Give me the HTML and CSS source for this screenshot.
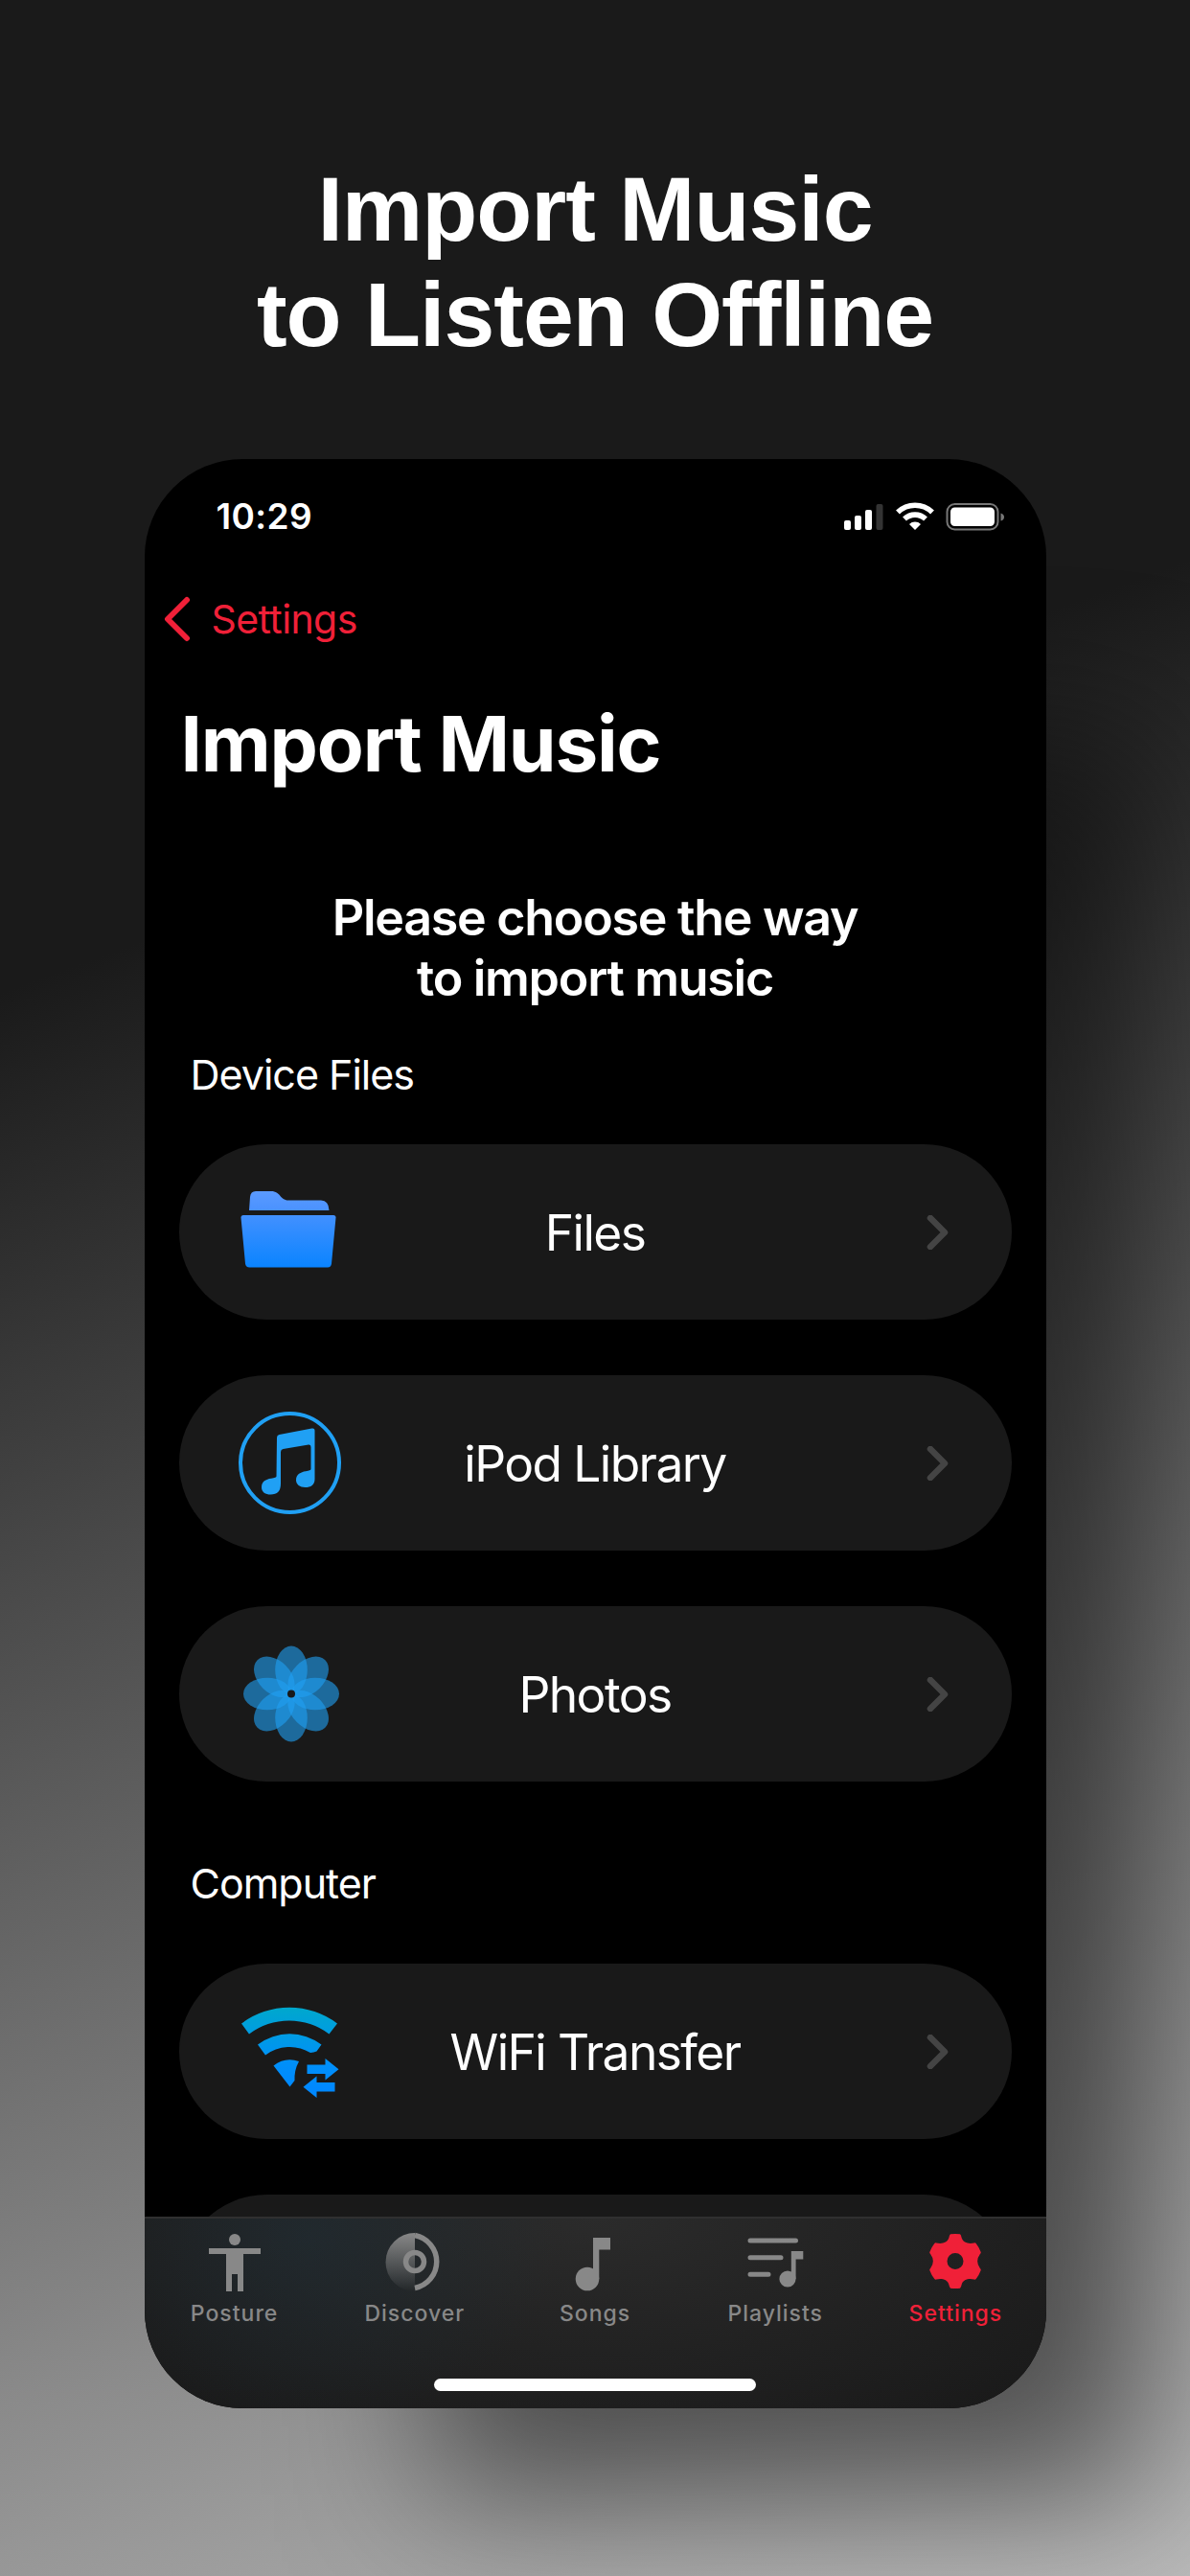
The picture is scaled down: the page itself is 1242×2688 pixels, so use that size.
FILE: index.html
```html
<!DOCTYPE html>
<html lang="en">
<head>
    <meta charset="UTF-8">
    <meta name="viewport" content="width=device-width, initial-scale=1.0">
    <title>Import Music</title>
    <link rel="stylesheet" href="styles.css">
</head>
<body>
    <h1 class="headline">Import Music<br>to Listen Offline</h1>

    <div class="phone">
        <div class="status-bar">
            <span class="time">10:29</span>
            <svg class="status-icons" width="170" height="32" viewBox="0 0 170 32">
                <!-- signal -->
                <rect x="1" y="20" width="7" height="10" rx="2" fill="#fff"/>
                <rect x="12" y="15" width="7" height="15" rx="2" fill="#fff"/>
                <rect x="23" y="9" width="7" height="21" rx="2" fill="#fff"/>
                <rect x="34.500" y="3" width="7" height="27" rx="2" fill="#333"/>
                <!-- wifi -->
                <g fill="none" stroke="#fff" stroke-width="5.600">
                    <path d="M57 11.500a26 26 0 0 1 36 0"/>
                    <path d="M64 18.500a16 16 0 0 1 22 0"/>
                </g>
                <path d="M75 30l-6-6a8.500 8.500 0 0 1 12 0z" fill="#fff"/>
                <!-- battery -->
                <rect x="108.500" y="3" width="53" height="26.500" rx="8" fill="none" stroke="#777" stroke-width="2"/>
                <rect x="112" y="6.500" width="46" height="19.500" rx="4.500" fill="#fff"/>
                <path d="M164.500 12.500q3.500 1 3.500 4t-3.500 4z" fill="#777"/>
            </svg>
        </div>

        <a class="back" href="#">
            <svg width="28" height="48" viewBox="0 0 28 48"><path d="M24 4L4 24l20 20" fill="none" stroke="#f02038" stroke-width="6" stroke-linecap="round" stroke-linejoin="round"/></svg>
            <span>Settings</span>
        </a>

        <h2 class="title">Import Music</h2>
        <p class="subtitle">Please choose the way<br>to import music</p>

        <div class="list">
            <h3 class="section">Device Files</h3>
            <a class="row" href="#">
                <svg class="row-icon" width="110" height="110" viewBox="0 0 110 110">
                    <defs>
                        <linearGradient id="folderBack" x1="0" y1="0" x2="0" y2="1">
                            <stop offset="0" stop-color="#5b9aff"/>
                            <stop offset="1" stop-color="#4a92ff"/>
                        </linearGradient>
                        <linearGradient id="folderFront" x1="0" y1="0" x2="0" y2="1">
                            <stop offset="0" stop-color="#4290ff"/>
                            <stop offset="1" stop-color="#0a84ff"/>
                        </linearGradient>
                    </defs>
                    <path d="M13 32l1-14q.500-6 6-6h16c10 0 9 9.500 18 9.500h34q8 0 8.500 10.500z" fill="url(#folderBack)"/>
                    <path d="M4.500 39.500q0-2.500 2.500-2.500h94q2.500 0 2.500 2.500l-4.500 48q-.500 4-4 4H13.500q-4 0-4.500-4z" fill="url(#folderFront)"/>
                </svg>
                <span class="row-label">Files</span>
                <svg class="chevron" width="24" height="36" viewBox="0 0 24 36"><path d="M4 3l15 15L4 33"/></svg>
            </a>
            <a class="row" href="#">
                <svg class="row-icon" width="110" height="110" viewBox="0 0 110 110">
                    <circle cx="55.500" cy="54.500" r="51.500" fill="none" stroke="#20a0f4" stroke-width="4"/>
                    <path d="M42 28q0-2.500 2.500-3l34-6.500q3-.500 3 2v51c0 6-4 8.500-10 8.500-5.500 0-9.500-3-9.500-7.500 0-6 5-8.500 10-9.200q5.500-.800 5.500-2.300V38q0-3-2.500-2.500L48.500 40q-2.500.500-2.500 3v33c0 8-3.500 11.500-10.500 11.500-5.500 0-9.500-2.500-9.500-7.500 0-6 4.500-8.500 10-9.200q5.500-.800 5.500-2.300z" fill="#20a0f4"/>
                </svg>
                <span class="row-label">iPod Library</span>
                <svg class="chevron" width="24" height="36" viewBox="0 0 24 36"><path d="M4 3l15 15L4 33"/></svg>
            </a>
            <a class="row" href="#">
                <svg class="row-icon" width="110" height="110" viewBox="0 0 110 110">
                    <g fill="#20a0f4" fill-opacity=".6">
                        <ellipse cx="57" cy="29.500" rx="16.800" ry="25"/>
                        <ellipse cx="57" cy="29.500" rx="16.800" ry="25" transform="rotate(45 57 54.500)"/>
                        <ellipse cx="57" cy="29.500" rx="16.800" ry="25" transform="rotate(90 57 54.500)"/>
                        <ellipse cx="57" cy="29.500" rx="16.800" ry="25" transform="rotate(135 57 54.500)"/>
                        <ellipse cx="57" cy="29.500" rx="16.800" ry="25" transform="rotate(180 57 54.500)"/>
                        <ellipse cx="57" cy="29.500" rx="16.800" ry="25" transform="rotate(225 57 54.500)"/>
                        <ellipse cx="57" cy="29.500" rx="16.800" ry="25" transform="rotate(270 57 54.500)"/>
                        <ellipse cx="57" cy="29.500" rx="16.800" ry="25" transform="rotate(315 57 54.500)"/>
                    </g>
                    <circle cx="57" cy="54.500" r="4" fill="#191919"/>
                </svg>
                <span class="row-label">Photos</span>
                <svg class="chevron" width="24" height="36" viewBox="0 0 24 36"><path d="M4 3l15 15L4 33"/></svg>
            </a>

            <h3 class="section section-computer">Computer</h3>
            <a class="row" href="#">
                <svg class="row-icon" width="110" height="110" viewBox="0 0 110 110">
                    <defs>
                        <linearGradient id="wifi" gradientUnits="userSpaceOnUse" x1="0" y1="8" x2="0" y2="95">
                            <stop offset="0" stop-color="#00a8cc"/>
                            <stop offset=".65" stop-color="#0090f8"/>
                            <stop offset="1" stop-color="#0088ff"/>
                        </linearGradient>
                    </defs>
                    <g fill="url(#wifi)">
                        <path d="M5 25.500a83 83 0 0 1 100 0l-8.500 11a69 69 0 0 0-83.500 0z"/>
                        <path d="M22 47.500a55 55 0 0 1 66.500 0l-5 7q-3 1-6.500 1.500a42 42 0 0 0-47 2.500z"/>
                        <path d="M38.500 69.500a28 28 0 0 1 26.500-4.500q-5 9-4.500 20l-5 6.500z"/>
                        <path d="M73.500 68.500h19V62l14 11.200-14 11.300v-6.500h-19z"/>
                        <path d="M102.500 87H83.500v-6.500l-14 11.200 14 11.300v-6.500h19z"/>
                    </g>
                </svg>
                <span class="row-label">WiFi Transfer</span>
                <svg class="chevron" width="24" height="36" viewBox="0 0 24 36"><path d="M4 3l15 15L4 33"/></svg>
            </a>
            <div class="row"></div>
        </div>

        <div class="tab-bar">
            <div class="tabs">
                <a class="tab" href="#">
                    <svg width="64" height="64" viewBox="0 0 64 64" fill="currentColor">
                        <circle cx="32" cy="8" r="6"/>
                        <path d="M5 17h54v6H41v39h-6V44h-6v18h-6V23H5z"/>
                    </svg>
                    Posture
                </a>
                <a class="tab" href="#">
                    <svg width="64" height="64" viewBox="0 0 64 64">
                        <defs>
                            <linearGradient id="disc" x1="0" y1="0" x2="0" y2="1">
                                <stop offset="0" stop-color="#888"/>
                                <stop offset="1" stop-color="#888" stop-opacity="0"/>
                            </linearGradient>
                        </defs>
                        <path d="M32 1a30.500 30.500 0 0 0 0 61z" fill="url(#disc)"/>
                        <path d="M32 3.500a28 28 0 0 1 0 55" fill="none" stroke="#888" stroke-width="5.500"/>
                        <circle cx="32" cy="31" r="9.500" fill="none" stroke="#888" stroke-width="5.500"/>
                    </svg>
                    Discover
                </a>
                <a class="tab" href="#">
                    <svg width="64" height="64" viewBox="0 0 64 64" fill="currentColor">
                        <circle cx="24" cy="49" r="12.300"/>
                        <path d="M30 6h18v12.500H36.300V49H30z"/>
                    </svg>
                    Songs
                </a>
                <a class="tab" href="#">
                    <svg width="64" height="64" viewBox="0 0 64 64" fill="currentColor">
                        <path d="M6 9h47.500M6 26.700h32M6 44.300h19" stroke="currentColor" stroke-width="5" stroke-linecap="round"/>
                        <circle cx="45" cy="49" r="8.600"/>
                        <path d="M48.800 20h12.500v8.500h-7.700V49h-4.800z"/>
                    </svg>
                    Playlists
                </a>
                <a class="tab active" href="#">
                    <svg width="64" height="64" viewBox="0 0 64 64" fill="currentColor">
                        <path fill-rule="evenodd" d="M27 2.300q5-.800 10 0q1 .700 1.700 4c1.500 5 7.500 6.500 13 5.100q1.300-.200 2 .6q3.300 4.200 5 9q.3 1-.8 2q-5.500 7.500 0 15q1.100 1 .8 2q-1.700 4.800-5 9q-.700.800-2 .6c-5.500-1.400-11.500.100-13 5.100q-.700 3.300-1.700 4q-5 .800-10 0q-1-.700-1.700-4c-1.500-5-7.500-6.500-13-5.100q-1.300.200-2-.6q-3.300-4.200-5-9q-.3-1 .8-2q5.500-7.500 0-15q-1.100-1-.8-2q1.700-4.800 5-9q.700-.800 2-.6c5.500 1.400 11.500-.100 13-5.100q.700-3.300 1.700-4zM32 22a8.500 8.500 0 1 0 0 17a8.500 8.500 0 1 0 0-17z"/>
                    </svg>
                    Settings
                </a>
            </div>
            <div class="home-indicator"></div>
        </div>
    </div>
</body>
</html>
```
FILE: styles.css
```css
* {
    box-sizing: border-box;
}

body {
    margin: 0;
    height: 2688px;
    padding-top: 163px;
    overflow: hidden;
    color: #fff;
    font-family: Inter, "Liberation Sans", sans-serif;
    background: linear-gradient(160deg, #1a1a1a 33%, #bababa 100%);
}

h1, h2, h3, p {
    margin: 0;
}

a {
    color: inherit;
    text-decoration: none;
}

svg {
    display: block;
    flex: none;
}

.headline {
    height: 316px;
    font: bold 95px/110px "Liberation Sans", Arial, sans-serif;
    letter-spacing: -1px;
    text-align: center;
}

.phone {
    display: flex;
    flex-direction: column;
    width: 941px;
    height: 2034px;
    margin: 0 auto;
    background: #000;
    border-radius: 102px;
    overflow: hidden;
    box-shadow: 200px 190px 150px -100px rgba(0, 0, 0, 0.5);
}

.status-bar {
    display: flex;
    flex: none;
    justify-content: space-between;
    align-items: center;
    height: 120px;
    padding: 0 42px 0 75px;
}

.time {
    margin-top: -2px;
    font-size: 37px;
    font-weight: 600;
    letter-spacing: 0.4px;
}

.back {
    display: flex;
    flex: none;
    align-items: center;
    gap: 22px;
    height: 93px;
    padding-left: 20px;
    color: #f02038;
    font-size: 41px;
    letter-spacing: -0.6px;
}

.title {
    flex: none;
    padding: 34px 0 0 38px;
    font-size: 80px;
    font-weight: 700;
    line-height: 100px;
    letter-spacing: -1.2px;
}

.subtitle {
    flex: none;
    padding-top: 100px;
    font-size: 52px;
    font-weight: 600;
    line-height: 63px;
    letter-spacing: -1.3px;
    text-align: center;
}

.list {
    flex: 1;
    min-height: 0;
    padding: 36px 36px 0;
    overflow: hidden;
}

.section {
    padding: 0 12px;
    margin-bottom: 40px;
    font-size: 43px;
    font-weight: 400;
    line-height: 66px;
    letter-spacing: -1px;
}

.section-computer {
    padding-top: 15px;
    margin-bottom: 51px;
}

.row {
    display: flex;
    align-items: center;
    height: 183px;
    margin-bottom: 58px;
    padding: 0 65px 0 60px;
    background: #191919;
    border-radius: 92px;
}

.row-label {
    flex: 1;
    padding-right: 81px;
    font-size: 51.5px;
    letter-spacing: -1.6px;
    text-align: center;
}

.chevron {
    fill: none;
    stroke: #444;
    stroke-width: 6.5;
    stroke-linecap: round;
    stroke-linejoin: round;
}

.tab-bar {
    flex: none;
    height: 200px;
    padding-top: 14px;
    border-top: 2px solid #303030;
    background:
        radial-gradient(ellipse 260px 200px at 170px 20px, rgba(30, 50, 62, 0.4), transparent),
        radial-gradient(ellipse 620px 260px at 470px 0, #2b2b2b, #1a1a1a);
}

.tabs {
    display: flex;
}

.tab {
    display: flex;
    flex: 1;
    flex-direction: column;
    align-items: center;
    gap: 3px;
    color: #888;
    font-size: 23px;
    font-weight: 500;
    line-height: 36px;
    letter-spacing: 1px;
}

.tab.active {
    color: #f02038;
}

.home-indicator {
    width: 336px;
    height: 13px;
    margin: 50px auto 0;
    background: #fff;
    border-radius: 7px;
}
```
